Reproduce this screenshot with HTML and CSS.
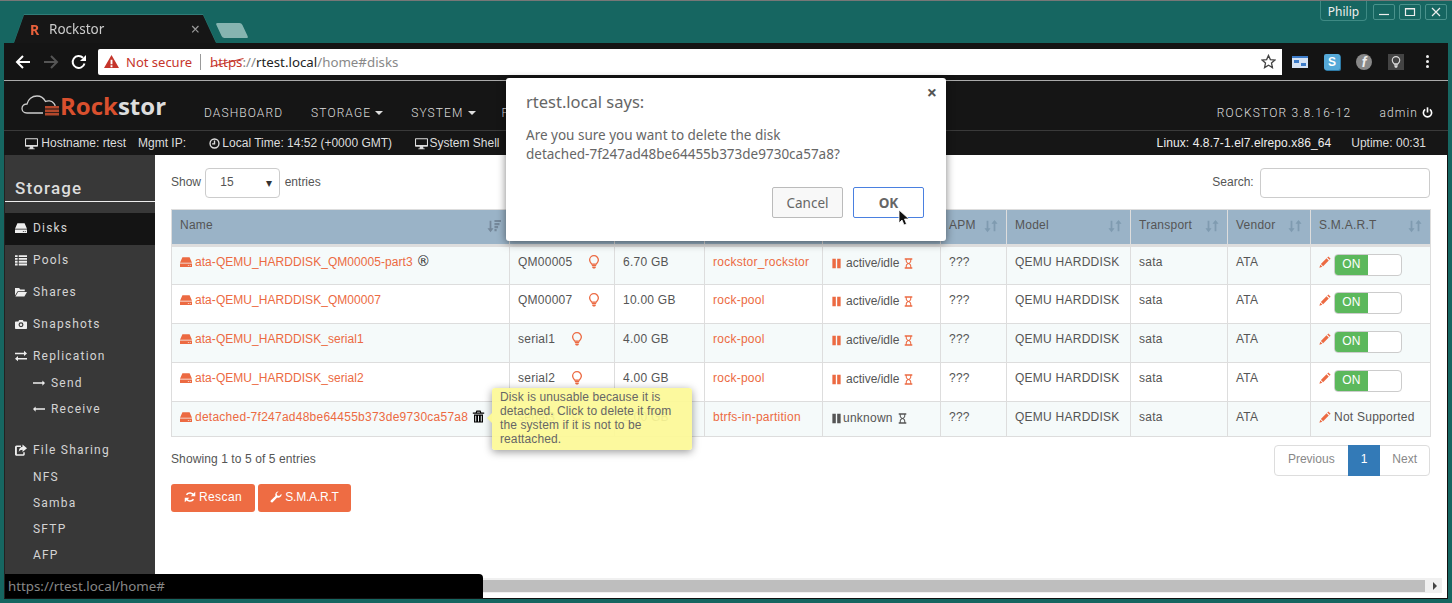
FILE: index.html
```html
<!DOCTYPE html>
<html lang="en">
<head>
    <meta charset="UTF-8">
    <title>Rockstor</title>
    <link rel="stylesheet" href="styles.css">
</head>
<body>
    <svg class="sprite" xmlns="http://www.w3.org/2000/svg">
        <symbol id="i-hdd" viewBox="0 0 16 16"><path fill-rule="evenodd" d="M3.2 1.5h9.6L16 9H0zM0 10h16v4.5H0zM10.5 12v1h1.3v-1zM13 12v1h1.3v-1z"/></symbol>
        <symbol id="i-list" viewBox="0 0 16 16"><path d="M0 1.5h3.5v2.6H0zM5 1.5h11v2.6H5zM0 5.2h3.5v2.6H0zM5 5.2h11v2.6H5zM0 8.9h3.5v2.6H0zM5 8.9h11v2.6H5zM0 12.6h3.5v2.6H0zM5 12.6h11v2.6H5z"/></symbol>
        <symbol id="i-folder" viewBox="0 0 16 16"><path d="M0 2.5h5.5L7 4.5h6V7H3.5L0 12.5zM4 8h12l-3.5 6H.6z"/></symbol>
        <symbol id="i-camera" viewBox="0 0 16 16"><path fill-rule="evenodd" d="M5.5 2.5h5l1 2H15a1 1 0 0 1 1 1v8a1 1 0 0 1-1 1H1a1 1 0 0 1-1-1v-8a1 1 0 0 1 1-1h3.5zM8 5.8a3.3 3.3 0 1 0 0 6.6 3.3 3.3 0 0 0 0-6.6zM8 7.4a1.7 1.7 0 1 1 0 3.4 1.7 1.7 0 0 1 0-3.4z"/></symbol>
        <symbol id="i-exchange" viewBox="0 0 16 16"><path d="M0 3.5h12V1l4 3.5L12 8V5.5H0zM16 10.5H4V8l-4 3.5L4 15v-2.5h12z"/></symbol>
        <symbol id="i-right" viewBox="0 0 16 16"><path d="M0 7h12.5V4.5L16 8l-3.5 3.5V9H0z"/></symbol>
        <symbol id="i-left" viewBox="0 0 16 16"><path d="M16 7H3.5V4.5L0 8l3.5 3.5V9H16z"/></symbol>
        <symbol id="i-share" viewBox="0 0 16 16"><path d="M0 4a2 2 0 0 1 2-2h6v2H2.5v9.5H11V11h2v3a1.5 1.5 0 0 1-1.5 1.5h-10A1.5 1.5 0 0 1 0 14zM10 .5l6 5-6 5v-3c-2.5 0-4 1-5 3 0-4 2-6.3 5-6.8z"/></symbol>
        <symbol id="i-refresh" viewBox="0 0 16 16"><path d="M15 1v6H9zM1 15V9h6z"/><path fill="none" stroke="currentColor" stroke-width="2" d="M13.2 6.5A5.6 5.6 0 0 0 3.3 5M2.8 9.5A5.6 5.6 0 0 0 12.7 11"/></symbol>
        <symbol id="i-wrench" viewBox="0 0 16 16"><path d="M15.5 4.5a4.5 4.5 0 0 1-6 4.2L3.5 15A1.8 1.8 0 0 1 1 12.5l6.3-6A4.5 4.5 0 0 1 11.5.5L8.8 3.2l.7 2.800 2.800.7 2.700-2.700z"/></symbol>
        <symbol id="i-pencil" viewBox="0 0 16 16"><path d="M12.5.5l3 3L14 5l-3-3zM10 3l3 3-7.5 7.5-3-3zM1.8 11.5l2.700 2.700-4 1.300z"/></symbol>
        <symbol id="i-trash" viewBox="0 0 16 16"><path fill-rule="evenodd" d="M5.5.5h5l1 2.500H15v1.500H1V3h3.500zM6 3h4l-.5-1h-3zM2.500 5.500h11v10h-11zM4 7v7h1.200V7zM7.400 7v7h1.200V7zM10.800 7v7H12V7z"/></symbol>
        <symbol id="i-bulb" viewBox="0 0 16 16"><path fill="none" stroke="currentColor" stroke-width="1.5" d="M5.5 10.500C4 9 3 8 3 5.800a5 5 0 0 1 10 0c0 2.200-1 3.200-2.500 4.700z"/><path d="M5.5 11h5v1.500h-5zM6 13h4v1.500l-1 1H7l-1-1z"/></symbol>
        <symbol id="i-pause" viewBox="0 0 16 16"><path d="M2 1h5v14H2zM9 1h5v14H9z"/></symbol>
        <symbol id="i-hourglass" viewBox="0 0 16 16"><path fill-rule="evenodd" d="M2.500.5h11v2H12v2C12 6.500 10.500 7.500 9.500 8c1 .5 2.500 1.500 2.500 3.500v2h1.500v2h-11v-2H4v-2C4 9.500 5.500 8.500 6.500 8 5.500 7.500 4 6.500 4 4.500v-2H2.500zM5.500 2.500v2c0 1.500 1.500 2.500 2.500 2.800 1-.3 2.500-1.300 2.500-2.800v-2zM8 8.700c-1 .3-2.500 1.300-2.500 2.800v2h5v-2c0-1.500-1.500-2.500-2.500-2.800z"/></symbol>
        <symbol id="i-desktop" viewBox="0 0 16 16"><path fill-rule="evenodd" d="M1 1.500h14a1 1 0 0 1 1 1V11a1 1 0 0 1-1 1h-5l.5 2H12v1H4v-1h1.500L6 12H1a1 1 0 0 1-1-1V2.500a1 1 0 0 1 1-1zM1.300 2.800v7h13.400v-7z"/></symbol>
        <symbol id="i-clock" viewBox="0 0 16 16"><g fill="none" stroke="currentColor" stroke-width="2"><circle cx="8" cy="8" r="6.5"/><path d="M8 3.500V8.500H4.500"/></g></symbol>
        <symbol id="i-power" viewBox="0 0 16 16"><g fill="none" stroke="currentColor" stroke-width="2.4"><path d="M4.600 3.500a6 6 0 1 0 6.800 0"/><path d="M8 .5v7.500"/></g></symbol>
        <symbol id="i-sort" viewBox="0 0 16 16"><path d="M4 15 .5 10.500H3V2h2v8.500h2.500zM12 1l3.500 4.500H13V14h-2V5.500H8.500z"/></symbol>
        <symbol id="i-sort-down" viewBox="0 0 16 16"><path d="M4 15 .5 10.500H3V2h2v8.500h2.500zM8.500 11.500H11V14H8.500zM8.500 8h4.200v2.500H8.500zM8.500 4.500h5.800V7H8.500zM8.500 1H16v2.500H8.500z"/></symbol>
    </svg>

    <div class="window">
        <div class="titlebar">
            <div class="tab-wrap">
                <div class="tab">
                    <span class="tab-icon">R</span>
                    <span class="tab-title">Rockstor</span>
                    <span class="tab-close">×</span>
                </div>
            </div>
            <div class="new-tab"></div>
            <div class="win-controls">
                <span class="win-user">Philip</span>
                <span class="win-btn"><svg viewBox="0 0 12 12"><path d="M1 8.500h10"/></svg></span>
                <span class="win-btn"><svg viewBox="0 0 12 12"><path d="M1.500 2.500h9v7h-9zM1.500 3h9"/></svg></span>
                <span class="win-btn"><svg viewBox="0 0 12 12"><path d="M2 2l8 8M10 2l-8 8"/></svg></span>
            </div>
        </div>

        <div class="toolbar">
            <svg class="nav-arrow" viewBox="0 0 16 16"><path d="M15 8H2M8 2 2 8l6 6"/></svg>
            <svg class="nav-arrow nav-arrow-off" viewBox="0 0 16 16"><path d="M1 8h13M8 2l6 6-6 6"/></svg>
            <svg class="nav-arrow nav-reload" viewBox="0 0 16 16"><path d="M13.500 9.500A6 6 0 1 1 12 3.800"/><path class="solid" d="M15 1v6H9z"/></svg>
            <div class="omnibox">
                <svg class="warn-icon" viewBox="0 0 16 16"><path fill-rule="evenodd" d="M8 1l8 14H0zM7 6v5h2V6zM7 12v2h2v-2z"/></svg>
                <span class="not-secure">Not secure</span>
                <span class="omni-sep"></span>
                <span class="url"><span class="url-https">https</span><span class="url-dim">://</span>rtest.local<span class="url-dim">/home#disks</span></span>
                <svg class="star" viewBox="0 0 16 16"><path d="M8 1.500l2 4.500 4.800.5-3.600 3.200 1 4.800L8 12l-4.200 2.500 1-4.800L1.200 6.500 6 6z"/></svg>
            </div>
            <div class="extensions">
                <svg class="ext" viewBox="0 0 16 16"><path fill="#d5e3f5" d="M0 2h16v12H0z"/><path fill="#3d7cc9" d="M0 2h16v2H0zM2 6h5v3H2zM9 9h5v3H9z"/></svg>
                <span class="ext ext-s">S</span>
                <span class="ext ext-f">f</span>
                <span class="ext ext-bulb"><svg viewBox="0 0 16 16"><use href="#i-bulb"/></svg></span>
                <span class="kebab"><i></i><i></i><i></i></span>
            </div>
        </div>

        <header class="navbar">
            <div class="logo">
                <svg class="logo-cloud" viewBox="0 0 40 22">
                    <path class="cloud-line" d="M22 19H6C2.500 19 1 16.500 1 14.500 1 11.500 3.500 10 6 10 7 5.500 11 2 16 2c4 0 7 2.500 8.500 5.500 2-1 6-1 8 1.500 1 1 1.500 2 1.700 3"/>
                    <path class="cloud-box" d="M24 12h14v2.600H24zM24 15.400h14V18H24zM24 18.800h14v2.700H24z"/>
                </svg>
                <span class="logo-text"><span class="logo-rock">Rock</span>stor</span>
            </div>
            <nav class="main-nav">
                <a>DASHBOARD</a>
                <a>STORAGE <span class="caret"></span></a>
                <a>SYSTEM <span class="caret"></span></a>
                <a>P</a>
            </nav>
            <div class="nav-right">
                <span class="version">ROCKSTOR 3.8.16-12</span>
                <span class="admin">admin <svg class="icon power-icon"><use href="#i-power"/></svg></span>
            </div>
        </header>

        <div class="subbar">
            <span class="sub-host"><svg class="icon"><use href="#i-desktop"/></svg> Hostname: rtest</span>
            <span class="sub-ip">Mgmt IP:</span>
            <span class="sub-time"><svg class="icon"><use href="#i-clock"/></svg> Local Time: 14:52 (+0000 GMT)</span>
            <span class="sub-shell"><svg class="icon"><use href="#i-desktop"/></svg> System Shell</span>
            <span class="sub-kernel">Linux: 4.8.7-1.el7.elrepo.x86_64</span>
            <span class="sub-uptime">Uptime: 00:31</span>
        </div>

        <div class="page">
            <aside class="sidebar">
                <h2>Storage</h2>
                <ul class="side-menu">
                    <li class="active"><svg class="icon"><use href="#i-hdd"/></svg>Disks</li>
                    <li><svg class="icon"><use href="#i-list"/></svg>Pools</li>
                    <li><svg class="icon"><use href="#i-folder"/></svg>Shares</li>
                    <li><svg class="icon"><use href="#i-camera"/></svg>Snapshots</li>
                    <li><svg class="icon"><use href="#i-exchange"/></svg>Replication</li>
                    <li class="sub"><svg class="icon"><use href="#i-right"/></svg>Send</li>
                    <li class="sub sub-last"><svg class="icon"><use href="#i-left"/></svg>Receive</li>
                    <li class="group"><svg class="icon"><use href="#i-share"/></svg>File Sharing</li>
                    <li class="plain">NFS</li>
                    <li class="plain">Samba</li>
                    <li class="plain">SFTP</li>
                    <li class="plain">AFP</li>
                </ul>
            </aside>

            <div class="main-col">
                <main class="content">
                    <div class="table-top">
                        <label class="length">Show <span class="select">15<span class="select-arrow">▾</span></span> entries</label>
                        <label class="search">Search: <span class="search-box"></span></label>
                    </div>

                    <table class="disks">
                        <colgroup>
                            <col class="c-name"><col class="c-serial"><col class="c-size"><col class="c-pool"><col class="c-power"><col class="c-apm"><col class="c-model"><col class="c-trans"><col class="c-vendor"><col class="c-smart">
                        </colgroup>
                        <thead>
                            <tr>
                                <th>Name<svg class="icon sort sort-on"><use href="#i-sort-down"/></svg></th>
                                <th>Serial<svg class="icon sort"><use href="#i-sort"/></svg></th>
                                <th>Capacity<svg class="icon sort"><use href="#i-sort"/></svg></th>
                                <th>Pool<svg class="icon sort"><use href="#i-sort"/></svg></th>
                                <th>Power Status<svg class="icon sort"><use href="#i-sort"/></svg></th>
                                <th>APM<svg class="icon sort"><use href="#i-sort"/></svg></th>
                                <th>Model<svg class="icon sort"><use href="#i-sort"/></svg></th>
                                <th>Transport<svg class="icon sort"><use href="#i-sort"/></svg></th>
                                <th>Vendor<svg class="icon sort"><use href="#i-sort"/></svg></th>
                                <th>S.M.A.R.T<svg class="icon sort"><use href="#i-sort"/></svg></th>
                            </tr>
                        </thead>
                        <tbody>
                            <tr>
                                <td><a class="ata"><svg class="icon disk"><use href="#i-hdd"/></svg>ata-QEMU_HARDDISK_QM00005-part3</a> <span class="reg">®</span></td>
                                <td><span class="serial">QM00005</span><svg class="icon bulb"><use href="#i-bulb"/></svg></td>
                                <td>6.70 GB</td>
                                <td><a>rockstor_rockstor</a></td>
                                <td class="power"><svg class="icon"><use href="#i-pause"/></svg>active/idle<svg class="icon"><use href="#i-hourglass"/></svg></td>
                                <td>???</td><td>QEMU HARDDISK</td><td>sata</td><td>ATA</td>
                                <td class="smart"><svg class="icon pencil"><use href="#i-pencil"/></svg><span class="toggle"><span class="toggle-on">ON</span></span></td>
                            </tr>
                            <tr>
                                <td><a class="ata"><svg class="icon disk"><use href="#i-hdd"/></svg>ata-QEMU_HARDDISK_QM00007</a></td>
                                <td><span class="serial">QM00007</span><svg class="icon bulb"><use href="#i-bulb"/></svg></td>
                                <td>10.00 GB</td>
                                <td><a>rock-pool</a></td>
                                <td class="power"><svg class="icon"><use href="#i-pause"/></svg>active/idle<svg class="icon"><use href="#i-hourglass"/></svg></td>
                                <td>???</td><td>QEMU HARDDISK</td><td>sata</td><td>ATA</td>
                                <td class="smart"><svg class="icon pencil"><use href="#i-pencil"/></svg><span class="toggle"><span class="toggle-on">ON</span></span></td>
                            </tr>
                            <tr>
                                <td><a class="ata"><svg class="icon disk"><use href="#i-hdd"/></svg>ata-QEMU_HARDDISK_serial1</a></td>
                                <td><span class="serial">serial1</span><svg class="icon bulb"><use href="#i-bulb"/></svg></td>
                                <td>4.00 GB</td>
                                <td><a>rock-pool</a></td>
                                <td class="power"><svg class="icon"><use href="#i-pause"/></svg>active/idle<svg class="icon"><use href="#i-hourglass"/></svg></td>
                                <td>???</td><td>QEMU HARDDISK</td><td>sata</td><td>ATA</td>
                                <td class="smart"><svg class="icon pencil"><use href="#i-pencil"/></svg><span class="toggle"><span class="toggle-on">ON</span></span></td>
                            </tr>
                            <tr>
                                <td><a class="ata"><svg class="icon disk"><use href="#i-hdd"/></svg>ata-QEMU_HARDDISK_serial2</a></td>
                                <td><span class="serial">serial2</span><svg class="icon bulb"><use href="#i-bulb"/></svg></td>
                                <td>4.00 GB</td>
                                <td><a>rock-pool</a></td>
                                <td class="power"><svg class="icon"><use href="#i-pause"/></svg>active/idle<svg class="icon"><use href="#i-hourglass"/></svg></td>
                                <td>???</td><td>QEMU HARDDISK</td><td>sata</td><td>ATA</td>
                                <td class="smart"><svg class="icon pencil"><use href="#i-pencil"/></svg><span class="toggle"><span class="toggle-on">ON</span></span></td>
                            </tr>
                            <tr class="last">
                                <td><a><svg class="icon disk"><use href="#i-hdd"/></svg>detached-7f247ad48be64455b373de9730ca57a8</a> <svg class="icon trash"><use href="#i-trash"/></svg></td>
                                <td><span class="serial">serial3</span><svg class="icon bulb"><use href="#i-bulb"/></svg></td>
                                <td>2.00 GB</td>
                                <td><a>btrfs-in-partition</a></td>
                                <td class="power power-off"><svg class="icon"><use href="#i-pause"/></svg>unknown<svg class="icon"><use href="#i-hourglass"/></svg></td>
                                <td>???</td><td>QEMU HARDDISK</td><td>sata</td><td>ATA</td>
                                <td class="smart smart-none"><svg class="icon pencil"><use href="#i-pencil"/></svg>Not Supported</td>
                            </tr>
                        </tbody>
                    </table>

                    <div class="table-bottom">
                        <span class="info">Showing 1 to 5 of 5 entries</span>
                        <div class="pagination">
                            <a>Previous</a><a class="current">1</a><a class="next">Next</a>
                        </div>
                    </div>

                    <div class="actions">
                        <button class="btn btn-rescan"><svg class="icon"><use href="#i-refresh"/></svg>Rescan</button>
                        <button class="btn btn-smart"><svg class="icon"><use href="#i-wrench"/></svg>S.M.A.R.T</button>
                    </div>
                </main>
                <div class="hscroll"><span class="hscroll-thumb"></span><span class="hscroll-arrow"></span></div>
            </div>
        </div>

        <div class="tooltip">Disk is unusable because it is detached. Click to delete it from the system if it is not to be reattached.</div>

        <div class="status-bubble">https://rtest.local/home#</div>

        <div class="dialog">
            <span class="dialog-close">×</span>
            <h3>rtest.local says:</h3>
            <p>Are you sure you want to delete the disk<br>detached-7f247ad48be64455b373de9730ca57a8?</p>
            <div class="dialog-buttons">
                <button class="dlg-btn">Cancel</button>
                <button class="dlg-btn dlg-ok">OK</button>
            </div>
        </div>

        <svg class="cursor" viewBox="0 0 12 18"><path d="M1 1v13l3-3 2 5 2.500-1-2-5h4.500z"/></svg>
    </div>
</body>
</html>
```

FILE: styles.css
```css
* {
    box-sizing: border-box;
}
html, body {
    margin: 0;
    height: 603px;
    overflow: hidden;
}
body {
    font-family: "Liberation Sans", Arial, sans-serif;
    font-size: 12px;
    color: #555;
}
.sprite {
    display: none;
}
.icon {
    width: 12px;
    height: 12px;
    fill: currentColor;
    vertical-align: -2px;
}
.window {
    position: relative;
    width: 1452px;
    height: 603px;
    display: flex;
    flex-direction: column;
    background-color: #166661;
    border-top: 1px solid #777;
    padding: 0 4px 4px 4px;
}

/* title bar */
.titlebar {
    height: 42px;
    flex: none;
    display: flex;
    align-items: flex-end;
    padding-left: 10px;
}
.tab-wrap {
    filter: drop-shadow(0 -1px 0 #2f7d78);
}
.tab {
    width: 202px;
    height: 28px;
    display: flex;
    align-items: center;
    padding: 0 16px 0 16px;
    background-color: #161616;
    clip-path: polygon(0 100%, 10px 0, 189px 0, 202px 100%);
    font-family: "Noto Sans", sans-serif;
    font-size: 13.5px;
    color: #ccc;
}
.tab-icon {
    color: #e8613c;
    font-weight: bold;
    font-size: 14px;
    width: 19px;
}
.tab-title {
    flex: 1;
}
.tab-close {
    color: #999;
    font-size: 16px;
}
.new-tab {
    width: 26px;
    height: 15px;
    margin: 0 0 5px 3px;
    background-color: #86b4b0;
    transform: skewX(25deg);
    border-radius: 2px;
}
.win-controls {
    margin-left: auto;
    align-self: flex-start;
    display: flex;
    align-items: flex-start;
    gap: 4px;
    padding-right: 1px;
    color: #eee;
}
.win-user {
    width: 47px;
    height: 20px;
    margin-right: 2px;
    text-align: center;
    line-height: 22px;
    font-family: "Noto Sans", sans-serif;
    font-size: 12px;
    border: 1px solid #3e8a84;
    border-top: none;
    border-radius: 0 0 4px 4px;
}
.win-btn {
    width: 22px;
    height: 16px;
    margin-top: 3px;
    border: 1px solid #4a928c;
    border-radius: 2px;
    display: flex;
    align-items: center;
    justify-content: center;
}
.win-btn svg {
    width: 12px;
    height: 12px;
    fill: none;
    stroke: #eee;
    stroke-width: 1.2;
}

/* browser toolbar */
.toolbar {
    height: 37px;
    flex: none;
    display: flex;
    align-items: center;
    background-color: #141414;
    padding-left: 11px;
}
.nav-arrow {
    width: 16px;
    height: 16px;
    margin-right: 12px;
    fill: none;
    stroke: #fff;
    stroke-width: 2;
}
.nav-arrow-off {
    stroke: #555;
}
.nav-reload .solid {
    fill: #fff;
    stroke: none;
}
.omnibox {
    width: 1184px;
    height: 26px;
    margin-left: -1px;
    background-color: #fff;
    border-radius: 2px 0 0 2px;
    display: flex;
    align-items: center;
    padding: 0 6px;
    font-family: "Noto Sans", sans-serif;
    font-size: 13px;
}
.warn-icon {
    width: 15px;
    height: 15px;
    fill: #c5352b;
    margin-right: 7px;
}
.not-secure {
    color: #c5352b;
}
.omni-sep {
    width: 1px;
    height: 16px;
    background-color: #999;
    margin: 0 9px 0 8px;
}
.url {
    flex: 1;
    color: #222;
    font-size: 13.3px;
}
.url-https {
    position: relative;
    color: #c5352b;
}
.url-https::after {
    content: "";
    position: absolute;
    left: 0;
    right: -2px;
    top: 9px;
    height: 1px;
    background-color: #c5352b;
    transform: rotate(-14deg);
}
.url-dim {
    color: #888;
}
.star {
    width: 15px;
    height: 15px;
    fill: none;
    stroke: #444;
    stroke-width: 1.4;
}
.extensions {
    flex: 1;
    display: flex;
    align-items: center;
    padding-left: 10px;
}
.ext {
    width: 16px;
    height: 16px;
    margin-right: 16px;
    flex: none;
}
.ext-s {
    background-color: #55a9d8;
    border-radius: 2px;
    color: #fff;
    font-weight: bold;
    text-align: center;
    line-height: 16px;
    box-shadow: 1px 1px 0 #2e7aa6;
}
.ext-f {
    background-color: #888;
    border-radius: 50%;
    color: #eee;
    font-style: italic;
    font-weight: bold;
    font-size: 14px;
    text-align: center;
    line-height: 16px;
}
.ext-bulb {
    background-color: #444;
    color: #ddd;
    padding: 2px;
}
.ext-bulb svg {
    display: block;
    width: 12px;
    height: 12px;
    fill: currentColor;
}
.kebab {
    margin-left: 6px;
    display: flex;
    flex-direction: column;
    gap: 2px;
}
.kebab i {
    width: 3px;
    height: 3px;
    background-color: #eee;
    border-radius: 50%;
}

/* app header */
.navbar {
    height: 51px;
    flex: none;
    display: flex;
    align-items: center;
    background-color: #151515;
    border-top: 1px solid #aaa;
    border-bottom: 1px solid #3a3a3a;
    padding-left: 17px;
    font-family: Roboto, sans-serif;
    font-weight: 300;
    font-size: 12px;
    letter-spacing: 1.1px;
    color: #ddd;
}
.logo {
    width: 183px;
    display: flex;
    align-items: center;
    flex: none;
}
.logo-cloud {
    width: 40px;
    height: 22px;
    margin-top: -2px;
}
.cloud-line {
    fill: none;
    stroke: #ccc;
    stroke-width: 1.3;
}
.cloud-box {
    fill: #b4482c;
}
.logo-text {
    font-family: "Open Sans", sans-serif;
    font-weight: 700;
    font-size: 24px;
    letter-spacing: 0;
    color: #ddd;
    margin-left: -1px;
    line-height: 28px;
}
.logo-rock {
    color: #d9502e;
}
.main-nav {
    display: flex;
    gap: 28px;
    margin-top: 14px;
    flex: none;
}
.main-nav a:last-child {
    margin-left: -2px;
}
.caret {
    display: inline-block;
    border-top: 4px solid #ddd;
    border-left: 4px solid transparent;
    border-right: 4px solid transparent;
    vertical-align: 2px;
}
.nav-right {
    margin-left: auto;
    display: flex;
    margin-top: 14px;
    padding-right: 15px;
}
.version {
    letter-spacing: 1.2px;
}
.admin {
    margin-left: 28px;
}
.power-icon {
    width: 11px;
    height: 11px;
    color: #fff;
    vertical-align: -1px;
}
.subbar {
    height: 24px;
    flex: none;
    display: flex;
    align-items: center;
    background-color: #161616;
    padding-left: 21px;
    color: #ddd;
    font-size: 12px;
    position: relative;
}
.subbar .icon {
    width: 13px;
    height: 13px;
    vertical-align: -3px;
}
.sub-ip {
    margin-left: 12px;
    width: 71px;
}
.subbar .sub-time .icon {
    width: 11px;
    height: 11px;
    vertical-align: -2px;
    margin-right: -1px;
}
.sub-shell {
    margin-left: 23px;
}
.sub-shell .icon {
    margin-right: -2px;
}
.sub-kernel {
    margin-left: auto;
    color: #eee;
    letter-spacing: 0.1px;
}
.sub-uptime {
    margin-left: 20px;
    padding-right: 22px;
}

/* page body */
.page {
    flex: 1;
    display: flex;
    min-height: 0;
    background-color: #fff;
    border-left: 1px solid #222;
    border-right: 1px solid #111;
    border-bottom: 1px solid #111;
}
.sidebar {
    width: 150px;
    flex: none;
    background-color: #383838;
    color: #d4d4d4;
    font-family: Roboto, sans-serif;
    font-size: 12px;
    letter-spacing: 1.2px;
}
.sidebar h2 {
    margin: 24px 0 11px;
    padding: 0 10px 3px;
    border-bottom: 1px solid #eee;
    font-size: 17px;
    font-weight: 500;
    line-height: 19px;
    letter-spacing: 1.2px;
    color: #ddd;
}
.side-menu {
    list-style: none;
    margin: 0;
    padding: 0;
}
.side-menu li {
    height: 32px;
    line-height: 30px;
    padding-left: 10px;
}
.side-menu .icon {
    color: #eee;
    margin-right: 6px;
}
.side-menu .active {
    background-color: #141414;
}
.side-menu .sub {
    height: 26px;
    line-height: 20px;
    padding-left: 28px;
}
.side-menu .sub-last {
    margin-bottom: 13px;
}
.side-menu .group {
    height: 28px;
    line-height: 25px;
}
.side-menu .plain {
    height: 26px;
    line-height: 22px;
    padding-left: 28px;
}
.main-col {
    flex: 1;
    min-width: 0;
    display: flex;
    flex-direction: column;
}
.content {
    flex: 1;
    min-height: 0;
    padding: 13px 17px 0 16px;
}
.table-top {
    display: flex;
    justify-content: space-between;
    height: 41px;
}
.select {
    display: inline-block;
    width: 75px;
    height: 30px;
    margin: 0 1px;
    padding: 0 14px;
    line-height: 27px;
    border: 1px solid #ccc;
    border-radius: 4px;
    color: #555;
    vertical-align: middle;
    position: relative;
}
.select-arrow {
    position: absolute;
    right: 7px;
    top: 1px;
    color: #333;
}
.search-box {
    display: inline-block;
    width: 170px;
    height: 30px;
    margin-left: 3px;
    border: 1px solid #ccc;
    border-radius: 4px;
    vertical-align: middle;
}

/* disks table */
.disks {
    width: 1259px;
    border-collapse: collapse;
    table-layout: fixed;
    letter-spacing: 0.25px;
}
.c-name { width: 338px; }
.c-serial { width: 105px; }
.c-size { width: 90px; }
.c-pool { width: 118px; }
.c-power { width: 118px; }
.c-apm { width: 66px; }
.c-model { width: 124px; }
.c-trans { width: 97px; }
.c-vendor { width: 83px; }
.c-smart { width: 120px; }
.disks th {
    height: 36px;
    padding: 0 8px 4px;
    text-align: left;
    font-weight: normal;
    background-color: #9ab3c7;
    border: 1px solid #ddd;
    border-bottom: 3px solid #ddd;
    color: #555;
}
.disks td {
    height: 39px;
    padding: 7px 8px 0;
    vertical-align: top;
    border: 1px solid #ddd;
    white-space: nowrap;
    line-height: 17px;
}
.disks tbody tr:nth-child(odd) {
    background-color: #f5fafa;
}
.disks .last td {
    height: 35px;
}
.disks a {
    color: #ec6a42;
}
.disks .ata {
    letter-spacing: 0.05px;
}
.sort {
    float: right;
    width: 14px;
    height: 14px;
    margin-top: 1px;
    color: #7f9bb0;
}
.sort-on {
    color: #75889a;
}
.disk {
    margin-right: 3px;
}
.reg {
    font-family: "DejaVu Sans", sans-serif;
    font-size: 14px;
    line-height: 14px;
    color: #333;
}
.trash {
    color: #000;
    width: 13px;
    height: 13px;
}
.serial {
    margin-right: 15px;
}
.bulb {
    color: #ec6a42;
    width: 14px;
    height: 14px;
    vertical-align: -3px;
}
.disks td.power {
    padding-top: 8px;
    letter-spacing: 0;
}
.disks td.power-off {
    letter-spacing: 0.25px;
}
.power .icon {
    color: #ec6a42;
    width: 11px;
    height: 11px;
}
.power .icon:first-child {
    margin-right: 4px;
}
.power .icon:last-child {
    margin-left: 4px;
}
.power-off .icon {
    color: #555;
}
.power-off .icon:first-child {
    margin-right: 1px;
}
.pencil {
    color: #ec6a42;
    margin-right: 3px;
}
.toggle {
    display: inline-block;
    width: 68px;
    height: 22px;
    border: 1px solid #ccc;
    border-radius: 4px;
    background-color: #fff;
    vertical-align: top;
    overflow: hidden;
}
.toggle-on {
    display: block;
    width: 33px;
    height: 20px;
    background-color: #5cb85c;
    color: #fff;
    text-align: center;
    line-height: 18px;
}
.table-bottom {
    display: flex;
    justify-content: space-between;
    margin-top: 8px;
    height: 39px;
    letter-spacing: 0.1px;
}
.info {
    padding-top: 7px;
}
.pagination {
    display: flex;
    height: 31px;
    border: 1px solid #ddd;
    border-radius: 4px;
    color: #888;
    line-height: 27px;
    letter-spacing: 0;
}
.pagination a {
    padding: 0 13px;
}
.pagination .next {
    padding: 0 12px;
}
.pagination .current {
    background-color: #337ab7;
    color: #fff;
    margin: -1px 0;
    line-height: 29px;
}
.actions {
    display: flex;
    gap: 3px;
}
.btn {
    height: 28px;
    padding: 0 0 2px;
    border: none;
    border-radius: 3px;
    background-color: #ee6c43;
    color: #fff;
    font-family: inherit;
    font-size: 12px;
    letter-spacing: 0.4px;
}
.btn-rescan {
    width: 84px;
}
.btn-smart {
    width: 93px;
    letter-spacing: -0.2px;
}
.btn .icon {
    margin-right: 3px;
}
.hscroll {
    height: 15px;
    flex: none;
    margin: 0 5px 5px 0;
    background-color: #f0f0f0;
    display: flex;
    align-items: center;
    padding: 1px 0;
}
.hscroll-thumb {
    flex: 1;
    height: 12px;
    background-color: #bebebe;
}
.hscroll-arrow {
    width: 0;
    height: 0;
    border-left: 4px solid #444;
    border-top: 4px solid transparent;
    border-bottom: 4px solid transparent;
    margin: 0 5px 0 8px;
    flex: none;
}

/* things over the page */
.tooltip {
    position: absolute;
    left: 492px;
    top: 387px;
    width: 200px;
    height: 62px;
    padding: 2px 8px;
    background-color: rgba(252, 248, 150, 0.92);
    border-radius: 3px;
    box-shadow: 0 2px 8px rgba(0, 0, 0, 0.4);
    color: #666;
    line-height: 14px;
    letter-spacing: 0.1px;
}
.tooltip::before {
    content: "";
    position: absolute;
    left: -5px;
    top: 25px;
    border-right: 5px solid #fcf896;
    border-top: 5px solid transparent;
    border-bottom: 5px solid transparent;
}
.status-bubble {
    position: absolute;
    left: 5px;
    top: 573px;
    width: 478px;
    height: 24px;
    padding-left: 3px;
    background-color: #000;
    border-radius: 0 4px 0 0;
    color: #888;
    font-family: "Noto Sans", sans-serif;
    font-size: 13.3px;
    line-height: 25px;
}
.dialog {
    position: absolute;
    left: 506px;
    top: 77px;
    width: 440px;
    height: 163px;
    padding: 13px 20px;
    background-color: #fff;
    border-radius: 3px;
    box-shadow: 0 2px 8px rgba(0, 0, 0, 0.5);
    font-family: "Noto Sans", sans-serif;
    color: #666;
}
.dialog-close {
    position: absolute;
    right: 9px;
    top: 5px;
    font-size: 18px;
    font-weight: bold;
    line-height: 18px;
    color: #555;
}
.dialog h3 {
    margin: 0;
    font-size: 16.5px;
    font-weight: normal;
    line-height: 22px;
}
.dialog p {
    margin: 13px 0 0;
    font-size: 13.5px;
    line-height: 19px;
}
.dialog-buttons {
    display: flex;
    justify-content: flex-end;
    gap: 10px;
    margin-top: 23px;
    padding-right: 2px;
}
.dlg-btn {
    width: 71px;
    height: 31px;
    border: 1px solid #bbb;
    border-radius: 2px;
    background-color: #f8f8f8;
    color: #666;
    font-family: inherit;
    font-size: 13.5px;
}
.dlg-ok {
    background-color: #fff;
    border-color: #4a80e0;
    font-weight: bold;
}
.cursor {
    position: absolute;
    left: 898px;
    top: 208px;
    width: 12px;
    height: 18px;
    fill: #111;
    stroke: #fff;
    stroke-width: 0.8;
}
```
